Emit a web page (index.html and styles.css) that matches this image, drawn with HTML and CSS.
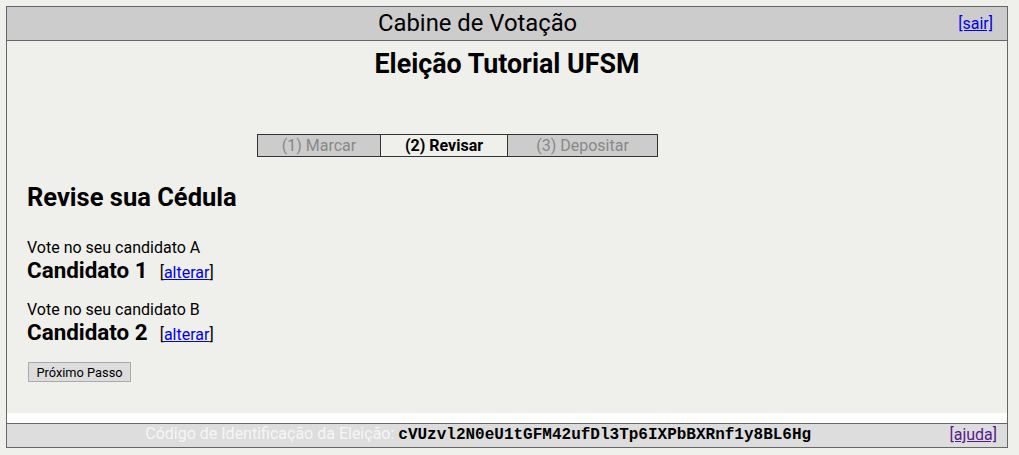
FILE: index.html
```html
<!DOCTYPE html>
<html lang="pt">
<head>
<meta charset="utf-8">
<title>Cabine de Votação</title>
<link rel="stylesheet" href="styles.css">
</head>
<body>
<div class="booth">
  <div class="header">
    <div class="header-title">Cabine de Votação</div>
    <a class="header-link" href="#">[sair]</a>
  </div>
  <div class="main">
    <h1 class="election">Eleição Tutorial UFSM</h1>
    <div class="steps">
      <div class="step">(1) Marcar</div>
      <div class="step step-active">(2) Revisar</div>
      <div class="step">(3) Depositar</div>
    </div>
    <h2 class="section">Revise sua Cédula</h2>
    <div class="questions">
      <div class="question">
        <div class="q-label">Vote no seu candidato A</div>
        <div class="q-answer"><span class="cand">Candidato 1</span><span class="edit">[<a href="#">alterar</a>]</span></div>
      </div>
      <div class="question">
        <div class="q-label">Vote no seu candidato B</div>
        <div class="q-answer"><span class="cand">Candidato 2</span><span class="edit">[<a href="#">alterar</a>]</span></div>
      </div>
    </div>
    <button class="next" type="button">Próximo Passo</button>
  </div>
  <div class="footer">
    <div class="footer-text">Código de Identificação da Eleição: <span class="code">cVUzvl2N0eU1tGFM42ufDl3Tp6IXPbBXRnf1y8BL6Hg</span></div>
    <a class="footer-link" href="#">[ajuda]</a>
  </div>
</div>
</body>
</html>
```
FILE: styles.css
```css
html, body {
  margin: 0;
  padding: 0;
  background: #eff0eb;
}
body {
  padding: 6px 0 0 6px;
  font-family: Roboto, "Liberation Sans", sans-serif;
  color: #000;
}
.booth {
  width: 1000px;
  border: 1px solid #666;
  background: #fff;
}
.header {
  display: flex;
  align-items: center;
  height: 33px;
  background: #cccccc;
  border-bottom: 1px solid #666;
}
.header-title {
  flex: 1;
  text-align: center;
  font-size: 23.8px;
  line-height: 33px;
}
.header-link {
  margin: 0 14px 0 10px;
  font-size: 16px;
  line-height: 33px;
  color: #0000ee;
}
.main {
  background: #eff0eb;
  padding: 8px 20px 31px 20px;
}
.election {
  margin: 0;
  text-align: center;
  font-size: 26.8px;
  line-height: 30px;
  font-weight: bold;
}
.steps {
  display: grid;
  grid-template-columns: 122px 127px 150px;
  width: 399px;
  margin: 55px 0 0 230px;
  border: 1px solid #333;
}
.step {
  height: 21px;
  line-height: 21px;
  text-align: center;
  font-size: 16px;
  background: #cccccc;
  color: #888;
}
.step + .step {
  border-left: 1px solid #333;
}
.step-active {
  background: #eff0eb;
  color: #000;
  font-weight: bold;
}
.section {
  margin: 26px 0 0 0;
  font-size: 25.5px;
  line-height: 28px;
  font-weight: bold;
}
.questions {
  display: flex;
  flex-direction: column;
  gap: 17px;
  margin-top: 27px;
}
.q-label {
  font-size: 16px;
  line-height: 20px;
}
.q-answer {
  height: 25px;
  line-height: 25px;
  overflow: visible;
}
.cand {
  font-size: 22.4px;
  font-weight: bold;
}
.edit {
  margin-left: 12px;
  font-size: 16px;
}
.edit a {
  color: #0000ee;
}
.next {
  display: block;
  margin: 17px 0 0 1px;
  width: 103px;
  height: 20px;
  padding: 0;
  font-family: Roboto, "Liberation Sans", sans-serif;
  font-size: 12.8px;
  color: #000;
  background: #dddddd;
  border: 1px solid #aaaaaa;
}
.footer {
  display: flex;
  align-items: center;
  height: 23px;
  margin-top: 10px;
  border-top: 1px solid #666;
  background: #dddddd;
}
.footer-text {
  flex: 1;
  text-align: center;
  font-size: 16px;
  line-height: 21px;
  padding-bottom: 2px;
  color: #f6f6f6;
}
.code {
  font-family: "Liberation Mono", "Courier New", monospace;
  font-weight: bold;
  color: #000;
  font-size: 16px;
}
.footer-link {
  margin-right: 10px;
  font-size: 16px;
  line-height: 21px;
  padding-bottom: 2px;
  color: #551a8b;
}
```
